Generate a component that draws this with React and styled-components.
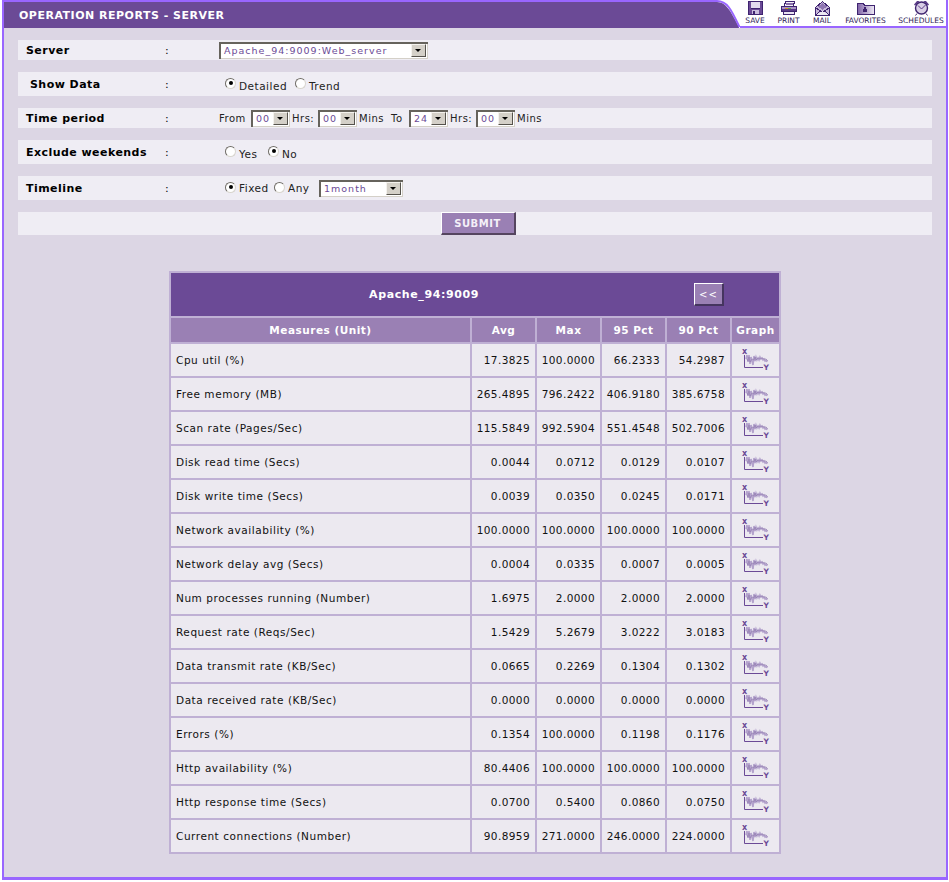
import styled, { createGlobalStyle } from 'styled-components';

const GlobalStyle = createGlobalStyle`
  html, body {
    margin: 0;
    padding: 0;
    background: #ffffff;
    font-family: "DejaVu Sans", Verdana, sans-serif;
  }
`;

const rows = [
  ['Cpu util (%)', '17.3825', '100.0000', '66.2333', '54.2987'],
  ['Free memory (MB)', '265.4895', '796.2422', '406.9180', '385.6758'],
  ['Scan rate (Pages/Sec)', '115.5849', '992.5904', '551.4548', '502.7006'],
  ['Disk read time (Secs)', '0.0044', '0.0712', '0.0129', '0.0107'],
  ['Disk write time (Secs)', '0.0039', '0.0350', '0.0245', '0.0171'],
  ['Network availability (%)', '100.0000', '100.0000', '100.0000', '100.0000'],
  ['Network delay avg (Secs)', '0.0004', '0.0335', '0.0007', '0.0005'],
  ['Num processes running (Number)', '1.6975', '2.0000', '2.0000', '2.0000'],
  ['Request rate (Reqs/Sec)', '1.5429', '5.2679', '3.0222', '3.0183'],
  ['Data transmit rate (KB/Sec)', '0.0665', '0.2269', '0.1304', '0.1302'],
  ['Data received rate (KB/Sec)', '0.0000', '0.0000', '0.0000', '0.0000'],
  ['Errors (%)', '0.1354', '100.0000', '0.1198', '0.1176'],
  ['Http availability (%)', '80.4406', '100.0000', '100.0000', '100.0000'],
  ['Http response time (Secs)', '0.0700', '0.5400', '0.0860', '0.0750'],
  ['Current connections (Number)', '90.8959', '271.0000', '246.0000', '224.0000'],
];

const SaveIcon = () => (
  <svg width="15" height="14" viewBox="0 0 15 14" shapeRendering="crispEdges">
    <rect x="0.5" y="0.5" width="14" height="13" fill="#6b4a96" stroke="#3f2470" />
    <rect x="3" y="1" width="9" height="6" fill="#e4dcef" />
    <rect x="3" y="7" width="9" height="1" fill="#3f2470" />
    <rect x="4" y="9" width="7" height="4" fill="#c9bcdc" />
    <rect x="5" y="10" width="2" height="3" fill="#3f2470" />
  </svg>
);

const PrintIcon = () => (
  <svg width="16" height="14" viewBox="0 0 16 14" shapeRendering="crispEdges">
    <path d="M5 0h9l-2 5H3z" fill="#f2eef7" stroke="#3f2470" />
    <path d="M5 2h7M4.500 3.500h7" stroke="#8a70ac" />
    <rect x="0.500" y="5.500" width="15" height="5" fill="#a993c6" stroke="#3f2470" />
    <rect x="4" y="7" width="3" height="1" fill="#d98a2b" />
    <rect x="7" y="7" width="3" height="1" fill="#5fa04e" />
    <rect x="1" y="8" width="14" height="2" fill="#5a3a88" />
    <rect x="2.500" y="10.500" width="11" height="3" fill="#e8e2f0" stroke="#3f2470" />
  </svg>
);

const MailIcon = () => (
  <svg width="15" height="15" viewBox="0 0 15 15" shapeRendering="crispEdges">
    <path d="M.5 6.500 7.500.5l7 6v8H.5z" fill="#c7b8da" stroke="#3f2470" />
    <path d="M3 5.500 7.500 2 12 5.500 7.500 9z" fill="#8f76b2" />
    <path d="M.5 6.500l7 5 7-5" fill="none" stroke="#3f2470" />
    <path d="M1 14h13L7.500 10z" fill="#ece7f3" />
    <path d="M.5 14.500l5-5M14.500 14.500l-5-5" stroke="#3f2470" />
  </svg>
);

const FavoritesIcon = () => (
  <svg width="18" height="12" viewBox="0 0 18 12" shapeRendering="crispEdges">
    <defs>
      <linearGradient id="folderFill" x1="0" x2="1" y1="0" y2="0">
        <stop offset="0" stopColor="#7f62a6" />
        <stop offset="1" stopColor="#efeaf5" />
      </linearGradient>
    </defs>
    <path d="M.5 11.500V.5h6l1 2h10v9z" fill="url(#folderFill)" stroke="#3f2470" />
    <path d="M8 3l1 2.500h2.500l-2 1.500 1 3L8 8.300 5.500 10l1-3-2-1.500H7z" fill="#3f2470" />
  </svg>
);

const SchedulesIcon = () => (
  <svg width="17" height="16" viewBox="0 0 17 16">
    <path d="M1 4.500 4 1h2.500L2 5.500zM16 4.500 13 1h-2.500L15 5.500z" fill="#5a3a88" />
    <circle cx="8.500" cy="8" r="6" fill="#d9cfe6" stroke="#3f2470" strokeWidth="1.400" />
    <path d="M8.500 9 5 5.500M8.500 9 12.500 5" stroke="#5a3a88" fill="none" />
    <path d="M4 13.500 2.500 15.500M13 13.500l1.500 2" stroke="#3f2470" />
  </svg>
);

const GraphIcon = () => (
  <svg width="30" height="24" viewBox="0 0 30 24">
    <text x="1" y="6" fontSize="8" fontWeight="700" fill="#6b4a96" fontFamily="DejaVu Sans, sans-serif">x</text>
    <text x="22.500" y="22" fontSize="7.500" fontWeight="700" fill="#6b4a96" fontFamily="DejaVu Sans, sans-serif">Y</text>
    <path d="M3.500 7v12.500H22" fill="none" stroke="#6b4a96" strokeWidth="1" />
    <path
      d="M5 11l1-4 1 7 1-7 1 9 1-7 1 4 1 4 1-9 1 5 1-4 1 3 1-2 1 2 1-3 1 2 1-1 1 2 1-1 1 2 1-1 1 2"
      fill="none"
      stroke="#b3a2cc"
      strokeWidth="1.600"
    />
    <path
      d="M6 11l1 2 1-4 1 5 2-3 2 1 1-3 1 3 2-2 2 1 2-1 2 1 2 0 2 2"
      fill="none"
      stroke="#8f78ad"
      strokeWidth="0.600"
    />
  </svg>
);

const tools = [
  { label: 'SAVE', width: 20, top: 1, icon: <SaveIcon /> },
  { label: 'PRINT', width: 23, top: 1, icon: <PrintIcon /> },
  { label: 'MAIL', width: 20, top: 1, icon: <MailIcon /> },
  { label: 'FAVORITES', width: 43, top: 3, icon: <FavoritesIcon /> },
  { label: 'SCHEDULES', width: 44, top: 0, icon: <SchedulesIcon /> },
];

function Dropdown({ width, value }) {
  return (
    <SelectBox $width={width}>
      <SelectValue>{value}</SelectValue>
      <SelectArrow />
    </SelectBox>
  );
}

export default function App() {
  return (
    <>
      <GlobalStyle />
      <Frame>
        <Header>
          <TitleTab>OPERATION REPORTS - SERVER</TitleTab>
          <TabCurve width="26" height="28" viewBox="0 0 26 28">
            <path d="M0 2h3c9 0 13 8 22 25v1H0z" fill="#6b4a96" />
            <path d="M0 1h3c10 0 14 8 22.500 26" fill="none" stroke="#9966ff" strokeWidth="2" />
          </TabCurve>
          <Toolbar>
            {tools.map((tool) => (
              <Tool key={tool.label} $width={tool.width}>
                <ToolIcon $top={tool.top}>{tool.icon}</ToolIcon>
                <ToolLabel>{tool.label}</ToolLabel>
              </Tool>
            ))}
          </Toolbar>
        </Header>

        <Form>
          <FormRow $height={20}>
            <Label>Server</Label>
            <Colon>:</Colon>
            <Value>
              <Dropdown width={209} value="Apache_94:9009:Web_server" />
            </Value>
          </FormRow>
          <FormRow $height={24}>
            <Label $indent={4}>Show Data</Label>
            <Colon>:</Colon>
            <Value $radio>
              <Radio $checked />
              <RadioText $width={56} $low>Detailed</RadioText>
              <Radio />
              <RadioText $low>Trend</RadioText>
            </Value>
          </FormRow>
          <FormRow $height={20}>
            <Label>Time period</Label>
            <Colon>:</Colon>
            <Value>
              <Word $width={32}>From</Word>
              <Dropdown width={39} value="00" />
              <Word $width={28} $left={2}>Hrs:</Word>
              <Dropdown width={39} value="00" />
              <Word $width={34} $left={2}>Mins</Word>
              <Word $width={18}>To</Word>
              <Dropdown width={39} value="24" />
              <Word $width={28} $left={2}>Hrs:</Word>
              <Dropdown width={39} value="00" />
              <Word $width={34} $left={2}>Mins</Word>
            </Value>
          </FormRow>
          <FormRow $height={24}>
            <Label>Exclude weekends</Label>
            <Colon>:</Colon>
            <Value $radio>
              <Radio />
              <RadioText $width={29} $low>Yes</RadioText>
              <Radio $checked />
              <RadioText $low>No</RadioText>
            </Value>
          </FormRow>
          <FormRow $height={24}>
            <Label>Timeline</Label>
            <Colon>:</Colon>
            <Value $radio>
              <Radio $checked />
              <RadioText $width={35}>Fixed</RadioText>
              <Radio />
              <RadioText $width={31}>Any</RadioText>
              <Dropdown width={84} value="1month" />
            </Value>
          </FormRow>
          <SubmitRow>
            <SubmitButton type="button">SUBMIT</SubmitButton>
          </SubmitRow>
        </Form>

        <ReportTable>
          <colgroup>
            <col style={{ width: 299 }} />
            <col style={{ width: 63 }} />
            <col style={{ width: 63 }} />
            <col style={{ width: 63 }} />
            <col style={{ width: 63 }} />
            <col style={{ width: 47 }} />
          </colgroup>
          <thead>
            <tr>
              <TitleCell colSpan={6}>
                <TitleBar>
                  <TitleText>Apache_94:9009</TitleText>
                  <BackButton type="button">&lt;&lt;</BackButton>
                </TitleBar>
              </TitleCell>
            </tr>
            <tr>
              <HeadCell>Measures (Unit)</HeadCell>
              <HeadCell>Avg</HeadCell>
              <HeadCell>Max</HeadCell>
              <HeadCell>95 Pct</HeadCell>
              <HeadCell>90 Pct</HeadCell>
              <HeadCell>Graph</HeadCell>
            </tr>
          </thead>
          <tbody>
            {rows.map((row) => (
              <tr key={row[0]}>
                <NameCell>{row[0]}</NameCell>
                {row.slice(1).map((val, i) => (
                  <NumCell key={i}>{val}</NumCell>
                ))}
                <GraphCell>
                  <GraphIcon />
                </GraphCell>
              </tr>
            ))}
          </tbody>
        </ReportTable>
      </Frame>
    </>
  );
}

// ---------------- styled components ----------------

const Frame = styled.div`
  box-sizing: border-box;
  width: 946px;
  height: 880px;
  margin-left: 2px;
  background: #dcd6e4;
  border-left: 2px solid #9966ff;
  border-right: 2px solid #9966ff;
  border-bottom: 3px solid #9966ff;
`;

const Header = styled.div`
  display: flex;
  height: 28px;
  background: #ffffff;
`;

const TitleTab = styled.div`
  width: 710px;
  box-sizing: border-box;
  padding: 7px 0 0 15px;
  background: #6b4a96;
  border-top: 2px solid #9966ff;
  color: #ffffff;
  font-size: 11px;
  font-weight: 700;
  line-height: 14px;
  letter-spacing: 0.500px;
`;

const TabCurve = styled.svg`
  display: block;
  flex: none;
`;

const Toolbar = styled.div`
  flex: 1;
  display: flex;
  gap: 12px;
  padding-left: 5px;
  border-bottom: 2px solid #9966ff;
`;

const Tool = styled.div`
  width: ${(p) => p.$width}px;
  display: flex;
  flex-direction: column;
  align-items: center;
`;

const ToolIcon = styled.div`
  box-sizing: border-box;
  height: 16px;
  padding-top: ${(p) => p.$top}px;

  svg {
    display: block;
  }
`;

const ToolLabel = styled.div`
  color: #2f1d55;
  font-size: 7.500px;
  line-height: 9px;
  white-space: nowrap;
`;

const Form = styled.div`
  display: flex;
  flex-direction: column;
  gap: 12px;
  padding: 12px 14px 0;
`;

const FormRow = styled.div`
  display: grid;
  grid-template-columns: 147px 54px 1fr;
  align-items: center;
  height: ${(p) => p.$height}px;
  background: #efedf4;
`;

const Label = styled.div`
  padding-left: ${(p) => 8 + (p.$indent || 0)}px;
  color: #000000;
  font-size: 11px;
  font-weight: 700;
  letter-spacing: 0.450px;
  white-space: nowrap;
`;

const Colon = styled.div`
  color: #000000;
  font-size: 11px;
`;

const Value = styled.div`
  display: flex;
  align-items: center;
  padding-left: ${(p) => (p.$radio ? 6 : 0)}px;
  color: #222222;
  font-size: 10px;
`;

const Word = styled.span`
  flex: none;
  width: ${(p) => p.$width - (p.$left || 0)}px;
  padding-left: ${(p) => p.$left || 0}px;
  color: #222222;
  font-size: 10px;
  letter-spacing: 0.500px;
  white-space: nowrap;
`;

const RadioText = styled.span`
  flex: none;
  width: ${(p) => (p.$width ? `${p.$width}px` : 'auto')};
  margin-left: 3px;
  padding-top: ${(p) => (p.$low ? 3 : 0)}px;
  color: #222222;
  font-size: 10.500px;
  letter-spacing: 0.500px;
  white-space: nowrap;
`;

const Radio = styled.span`
  position: relative;
  box-sizing: border-box;
  flex: none;
  width: 11px;
  height: 11px;
  margin-top: -2px;
  border-radius: 50%;
  background: #ffffff;
  border: 1px solid #6f6c66;
  border-right-color: #d8d5ce;
  border-bottom-color: #d8d5ce;

  &::after {
    content: '';
    display: ${(p) => (p.$checked ? 'block' : 'none')};
    position: absolute;
    left: 2.500px;
    top: 2.500px;
    width: 4px;
    height: 4px;
    border-radius: 50%;
    background: #000000;
  }
`;

const SelectBox = styled.div`
  box-sizing: border-box;
  display: flex;
  align-items: center;
  flex: none;
  width: ${(p) => p.$width}px;
  height: 17px;
  background: #ffffff;
  box-shadow: inset 2px 2px 0 #66635c, inset -1px -1px 0 #d4d0c8;
`;

const SelectValue = styled.span`
  flex: 1;
  padding-left: 5px;
  overflow: hidden;
  color: #6b4a96;
  font-size: 9.500px;
  letter-spacing: 1px;
  white-space: nowrap;
`;

const SelectArrow = styled.span`
  position: relative;
  box-sizing: border-box;
  flex: none;
  width: 15px;
  height: 13px;
  margin: 1px 2px 0 0;
  background: #d4d0c8;
  border-right: 1px solid #55524c;
  border-bottom: 1px solid #55524c;
  border-top: 1px solid #f4f2ee;
  border-left: 1px solid #f4f2ee;

  &::after {
    content: '';
    position: absolute;
    left: 3px;
    top: 4px;
    border: 3px solid transparent;
    border-top: 3px solid #000000;
    border-bottom: 0;
  }
`;

const SubmitRow = styled.div`
  display: flex;
  justify-content: center;
  height: 23px;
  background: #efedf4;
`;

const SubmitButton = styled.button`
  box-sizing: border-box;
  width: 75px;
  height: 23px;
  margin-left: 6px;
  padding: 0;
  background: #9a80b4;
  border: 1px solid;
  border-color: #ffffff #55455f #55455f #ffffff;
  border-bottom-width: 2px;
  border-right-width: 2px;
  color: #f4f0f8;
  font-family: inherit;
  font-size: 10px;
  font-weight: 700;
  letter-spacing: 0.500px;
`;

const ReportTable = styled.table`
  width: 612px;
  margin: 36px 0 0 165px;
  table-layout: fixed;
  border-collapse: separate;
  border-spacing: 2px;
  background: #bfb0d4;
`;

const TitleCell = styled.th`
  height: 43px;
  padding: 0;
  background: #6b4a96;
`;

const TitleBar = styled.div`
  display: flex;
  align-items: center;
`;

const TitleText = styled.div`
  width: 506px;
  color: #ffffff;
  font-size: 11px;
  font-weight: 700;
  letter-spacing: 0.600px;
  text-align: center;
`;

const BackButton = styled.button`
  box-sizing: border-box;
  width: 30px;
  height: 23px;
  margin-left: 17px;
  padding: 0;
  background: #9a80b4;
  border: 1px solid;
  border-color: #ffffff #45355f #45355f #ffffff;
  border-bottom-width: 2px;
  border-right-width: 2px;
  color: #ffffff;
  font-family: inherit;
  font-size: 10px;
  letter-spacing: 1px;
`;

const HeadCell = styled.th`
  height: 24px;
  padding: 0;
  background: #9a80b4;
  color: #ffffff;
  font-size: 10.500px;
  font-weight: 700;
  letter-spacing: 0.500px;
  text-align: center;
  white-space: nowrap;
`;

const NameCell = styled.td`
  height: 32px;
  padding: 0 0 0 5px;
  background: #ece9f0;
  color: #111111;
  font-size: 10.500px;
  letter-spacing: 0.550px;
  white-space: nowrap;
`;

const NumCell = styled.td`
  padding: 0 5px 0 0;
  background: #ece9f0;
  color: #111111;
  font-size: 10.500px;
  letter-spacing: 0.400px;
  text-align: right;
  white-space: nowrap;
`;

const GraphCell = styled.td`
  padding: 0;
  background: #ece9f0;
  text-align: center;
  line-height: 0;
`;
